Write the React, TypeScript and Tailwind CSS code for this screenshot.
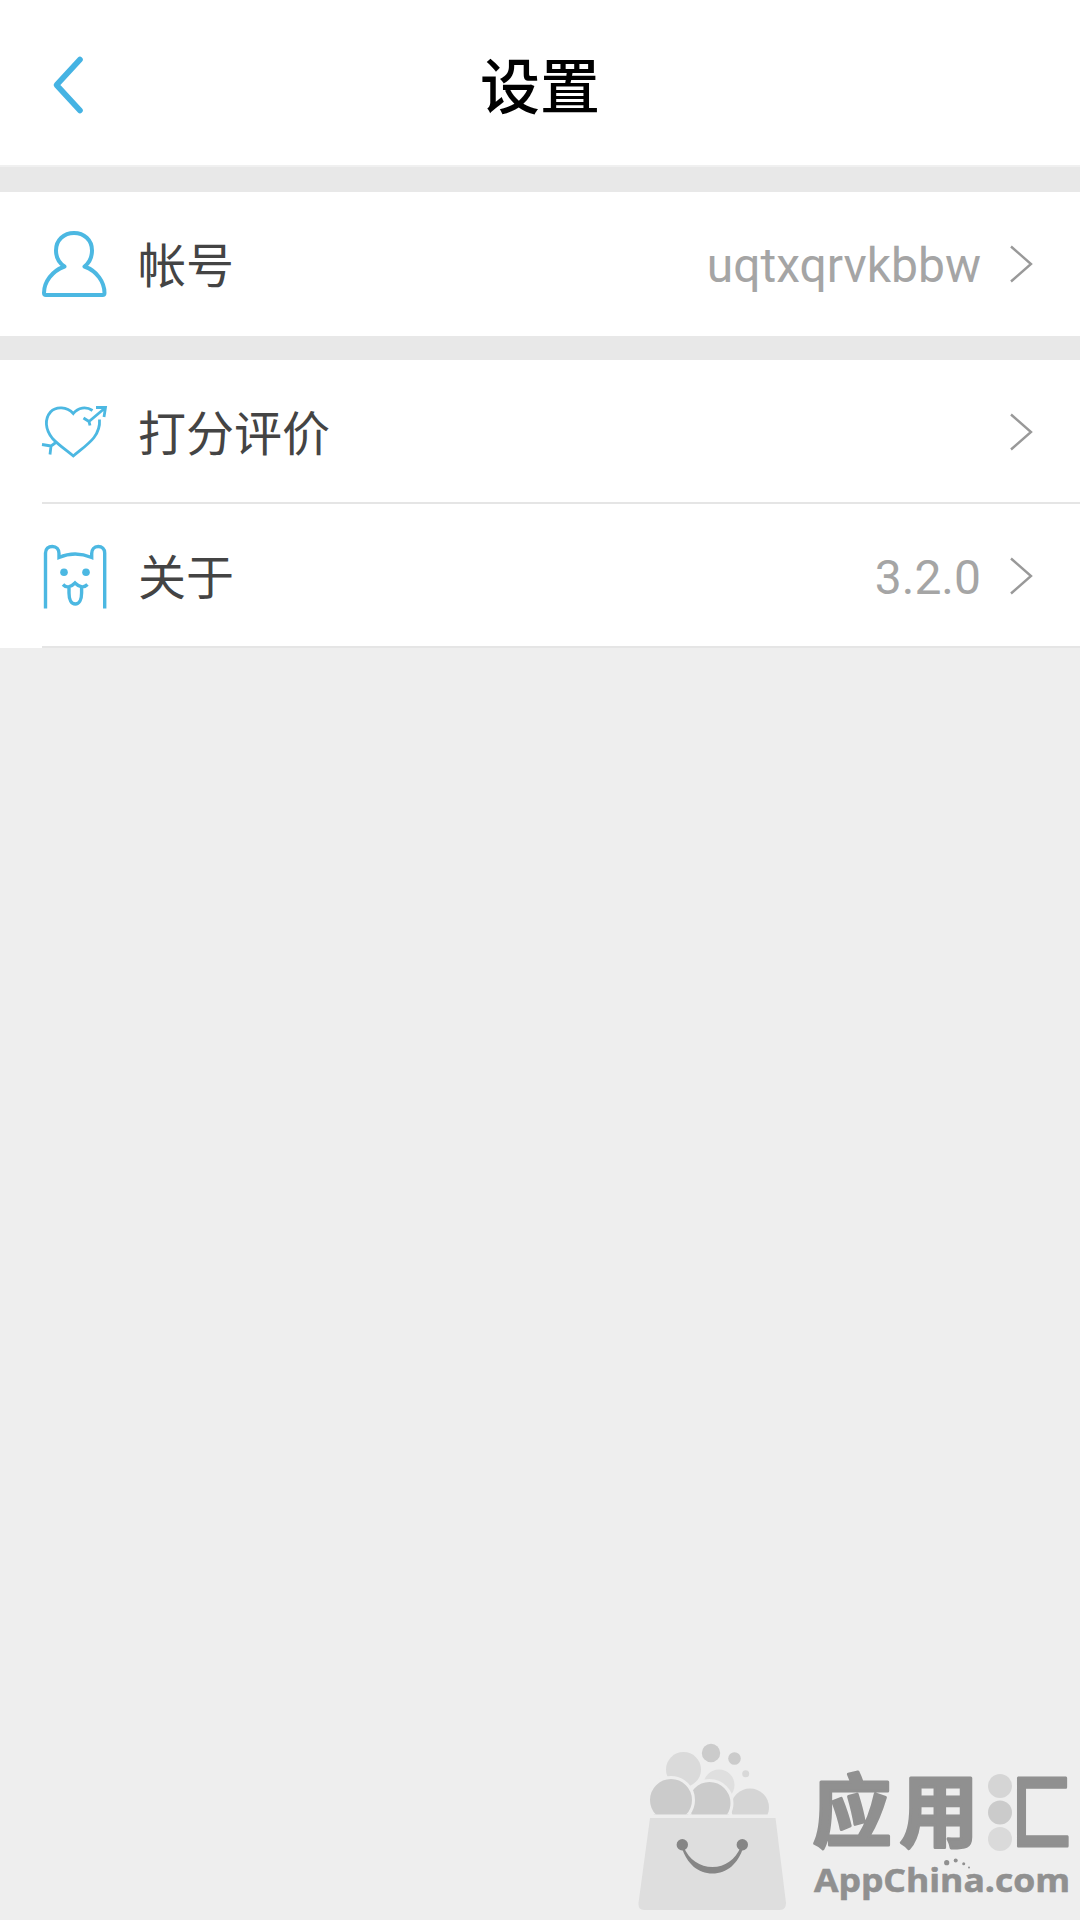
import type { ReactNode } from 'react'

function BackIcon() {
  return (
    <svg className="w-9 h-16" viewBox="50 53 36 64" fill="none" stroke="#45b3e3" strokeWidth="5.6" strokeLinecap="round" strokeLinejoin="round">
      <path d="M80 59.5 56.5 85 80 110.5" />
    </svg>
  )
}

function ChevronIcon() {
  return (
    <svg className="w-6 h-10" viewBox="1009 244 24 40" fill="none" stroke="#999999" strokeWidth="2.4">
      <path d="M1011 246.5 1031 264 1011 281.5" />
    </svg>
  )
}

function AccountIcon() {
  return (
    <svg className="size-[68px]" viewBox="40 230 68 68" fill="none" stroke="#4cb8e2" strokeWidth="4" strokeLinejoin="round">
      <path d="M64.5 266.500C59 263 56 257 56 250.500C56 240 64 233 74 233C84 233 92 240 92 250.500C92 257 89 263 84.500 266.500C97 271 104.500 282 104.500 293Q104.500 295 102.500 295H46Q44 295 44 293C44 282 52 271 64.500 266.500Z" />
    </svg>
  )
}

function HeartIcon() {
  return (
    <svg className="size-[68px]" viewBox="40 398 68 68" fill="none" stroke="#4cb8e2" strokeWidth="2.800">
      <path d="M92.500 410.500C86 406 78 407.500 73.300 413.500C67 406.500 56 406 50.500 412C44.500 419 45 429 52.500 438.500C58 444.500 66 450 73.300 456C81 449.500 89 444 94 437.500C98.500 431.500 100 426 99.500 419.500" />
      <path d="M89 421.500 105 408M96 407.500H105.500L104 417M83.500 418 89 421.500 90 425.500" />
      <path d="M56.500 442 51 446 50 454.500M42 444.500 51 446" />
    </svg>
  )
}

function BearIcon() {
  return (
    <svg className="size-[68px]" viewBox="40 542 68 68" fill="none" stroke="#4cb8e2" strokeWidth="3.400">
      <path d="M45.500 608.500V553C45.500 548.500 48.500 546.500 52.300 546.500C56.500 546.500 59 549.500 59 553.500V557.500Q75 550.500 91.700 557.500V553.500C91.700 549.500 94 546.500 98.200 546.500C102 546.500 104.700 549 104.700 553V608.500" />
      <path d="M63 584.500Q68 590 75 583Q82 590 87.500 584.500M69 587V593C69 600 71.500 604 75.300 604C79 604 81.600 600 81.600 593V587" />
      <g fill="#4cb8e2" stroke="none">
        <circle cx="64" cy="572.300" r="3.800" />
        <circle cx="86" cy="572.300" r="3.800" />
      </g>
    </svg>
  )
}

function StoreLogo() {
  return (
    <svg className="w-[450px] h-[180px]" viewBox="630 1740 450 180">
      <defs>
        <clipPath id="balls">
          <rect x="630" y="1740" width="160" height="74.5" />
        </clipPath>
      </defs>
      <g clipPath="url(#balls)">
        <circle cx="683.5" cy="1769.5" r="17.5" fill="#dadada" />
        <circle cx="719" cy="1785" r="15.5" fill="#dfdfdf" />
        <circle cx="750" cy="1807.5" r="19" fill="#d5d5d5" />
        <g fill="#cbcbcb" stroke="#eeeeee" strokeWidth="3">
          <circle cx="709.5" cy="1803" r="22.5" />
          <circle cx="671" cy="1800" r="22.5" />
        </g>
        <circle cx="711" cy="1753" r="9.2" fill="#cbcbcb" />
        <circle cx="734.5" cy="1758.5" r="6.3" fill="#cbcbcb" />
        <circle cx="745.7" cy="1773.7" r="3.5" fill="#d8d8d8" />
      </g>
      <path d="M650 1818H775.500L786 1903Q786 1910 780 1910H644Q638 1910 638.500 1903Z" fill="#dedede" />
      <g fill="#868686">
        <circle cx="682.3" cy="1844.7" r="5.7" />
        <circle cx="742.3" cy="1844.7" r="5.7" />
        <path d="M681.500 1847C687 1864 698 1873.500 712.500 1873.500C727 1873.500 738 1864 743.500 1847L741 1846.500C735 1860 725 1867 712.500 1867C700 1867 689 1860 683.500 1846.500Z" />
      </g>
      <g fill="#909090" stroke="#909090" strokeWidth="3" strokeLinejoin="round" className="font-['Noto_Sans_CJK_SC',sans-serif] font-bold text-[79px]">
        <text x="812.5" y="1841">应</text>
        <text x="899.5" y="1841">用</text>
        <text transform="translate(1012 1842.500) scale(.76 1.040)">匚</text>
      </g>
      <circle cx="1000" cy="1786" r="12" fill="#d5d5d5" />
      <circle cx="1000" cy="1812.5" r="12" fill="#cbcbcb" />
      <circle cx="1000" cy="1839" r="12" fill="#dadada" />
      <g fill="#909090">
        <text x="814" y="1892" textLength="256" lengthAdjust="spacingAndGlyphs" stroke="#909090" strokeWidth="0.6" className="font-['Open_Sans',sans-serif] font-bold text-[33px]">
          AppChina.com
        </text>
        <circle cx="946.7" cy="1862.7" r="2.6" />
        <circle cx="955.7" cy="1860.5" r="2" />
        <circle cx="963.7" cy="1863.7" r="1.5" />
        <circle cx="969" cy="1867.5" r="1" />
      </g>
    </svg>
  )
}

type RowProps = {
  icon: ReactNode
  label: string
  value?: string
}

function Row({ icon, label, value }: RowProps) {
  return (
    <button type="button" className="flex w-full h-36 items-center bg-white pl-10 pr-[47px] text-left">
      {icon}
      <span className="ml-[30px] pb-[5px] text-[48px] leading-none text-[#444444]">{label}</span>
      <span className="ml-auto mr-7 pt-1 text-[48px] leading-none text-[#a5a5a5] font-['Roboto',sans-serif]">{value}</span>
      <ChevronIcon />
    </button>
  )
}

function Divider() {
  return <div className="-mt-0.5 relative ml-[42px] h-0.5 bg-[#e5e5e5]" />
}

export default function App() {
  return (
    <div className="flex min-h-[1920px] w-[1080px] flex-col bg-[#eeeeee] font-['Noto_Sans_CJK_SC',sans-serif]">
      <header className="grid h-[167px] grid-cols-[1fr_auto_1fr] items-center border-b-2 border-[#f0f0f0] bg-white pt-1 pl-[50px] pr-[50px]">
        <button type="button" className="justify-self-start" aria-label="返回">
          <BackIcon />
        </button>
        <h1 className="pb-1 text-[60px] leading-none font-medium text-black">设置</h1>
      </header>

      <main>
        <section className="border-t-[25px] border-[#e8e8e8]">
          <Row icon={<AccountIcon />} label="帐号" value="uqtxqrvkbbw" />
        </section>
        <section className="border-t-[24px] border-[#e8e8e8]">
          <Row icon={<HeartIcon />} label="打分评价" />
          <Divider />
          <Row icon={<BearIcon />} label="关于" value="3.2.0" />
          <Divider />
        </section>
      </main>

      <footer className="mt-auto self-end">
        <StoreLogo />
      </footer>
    </div>
  )
}
